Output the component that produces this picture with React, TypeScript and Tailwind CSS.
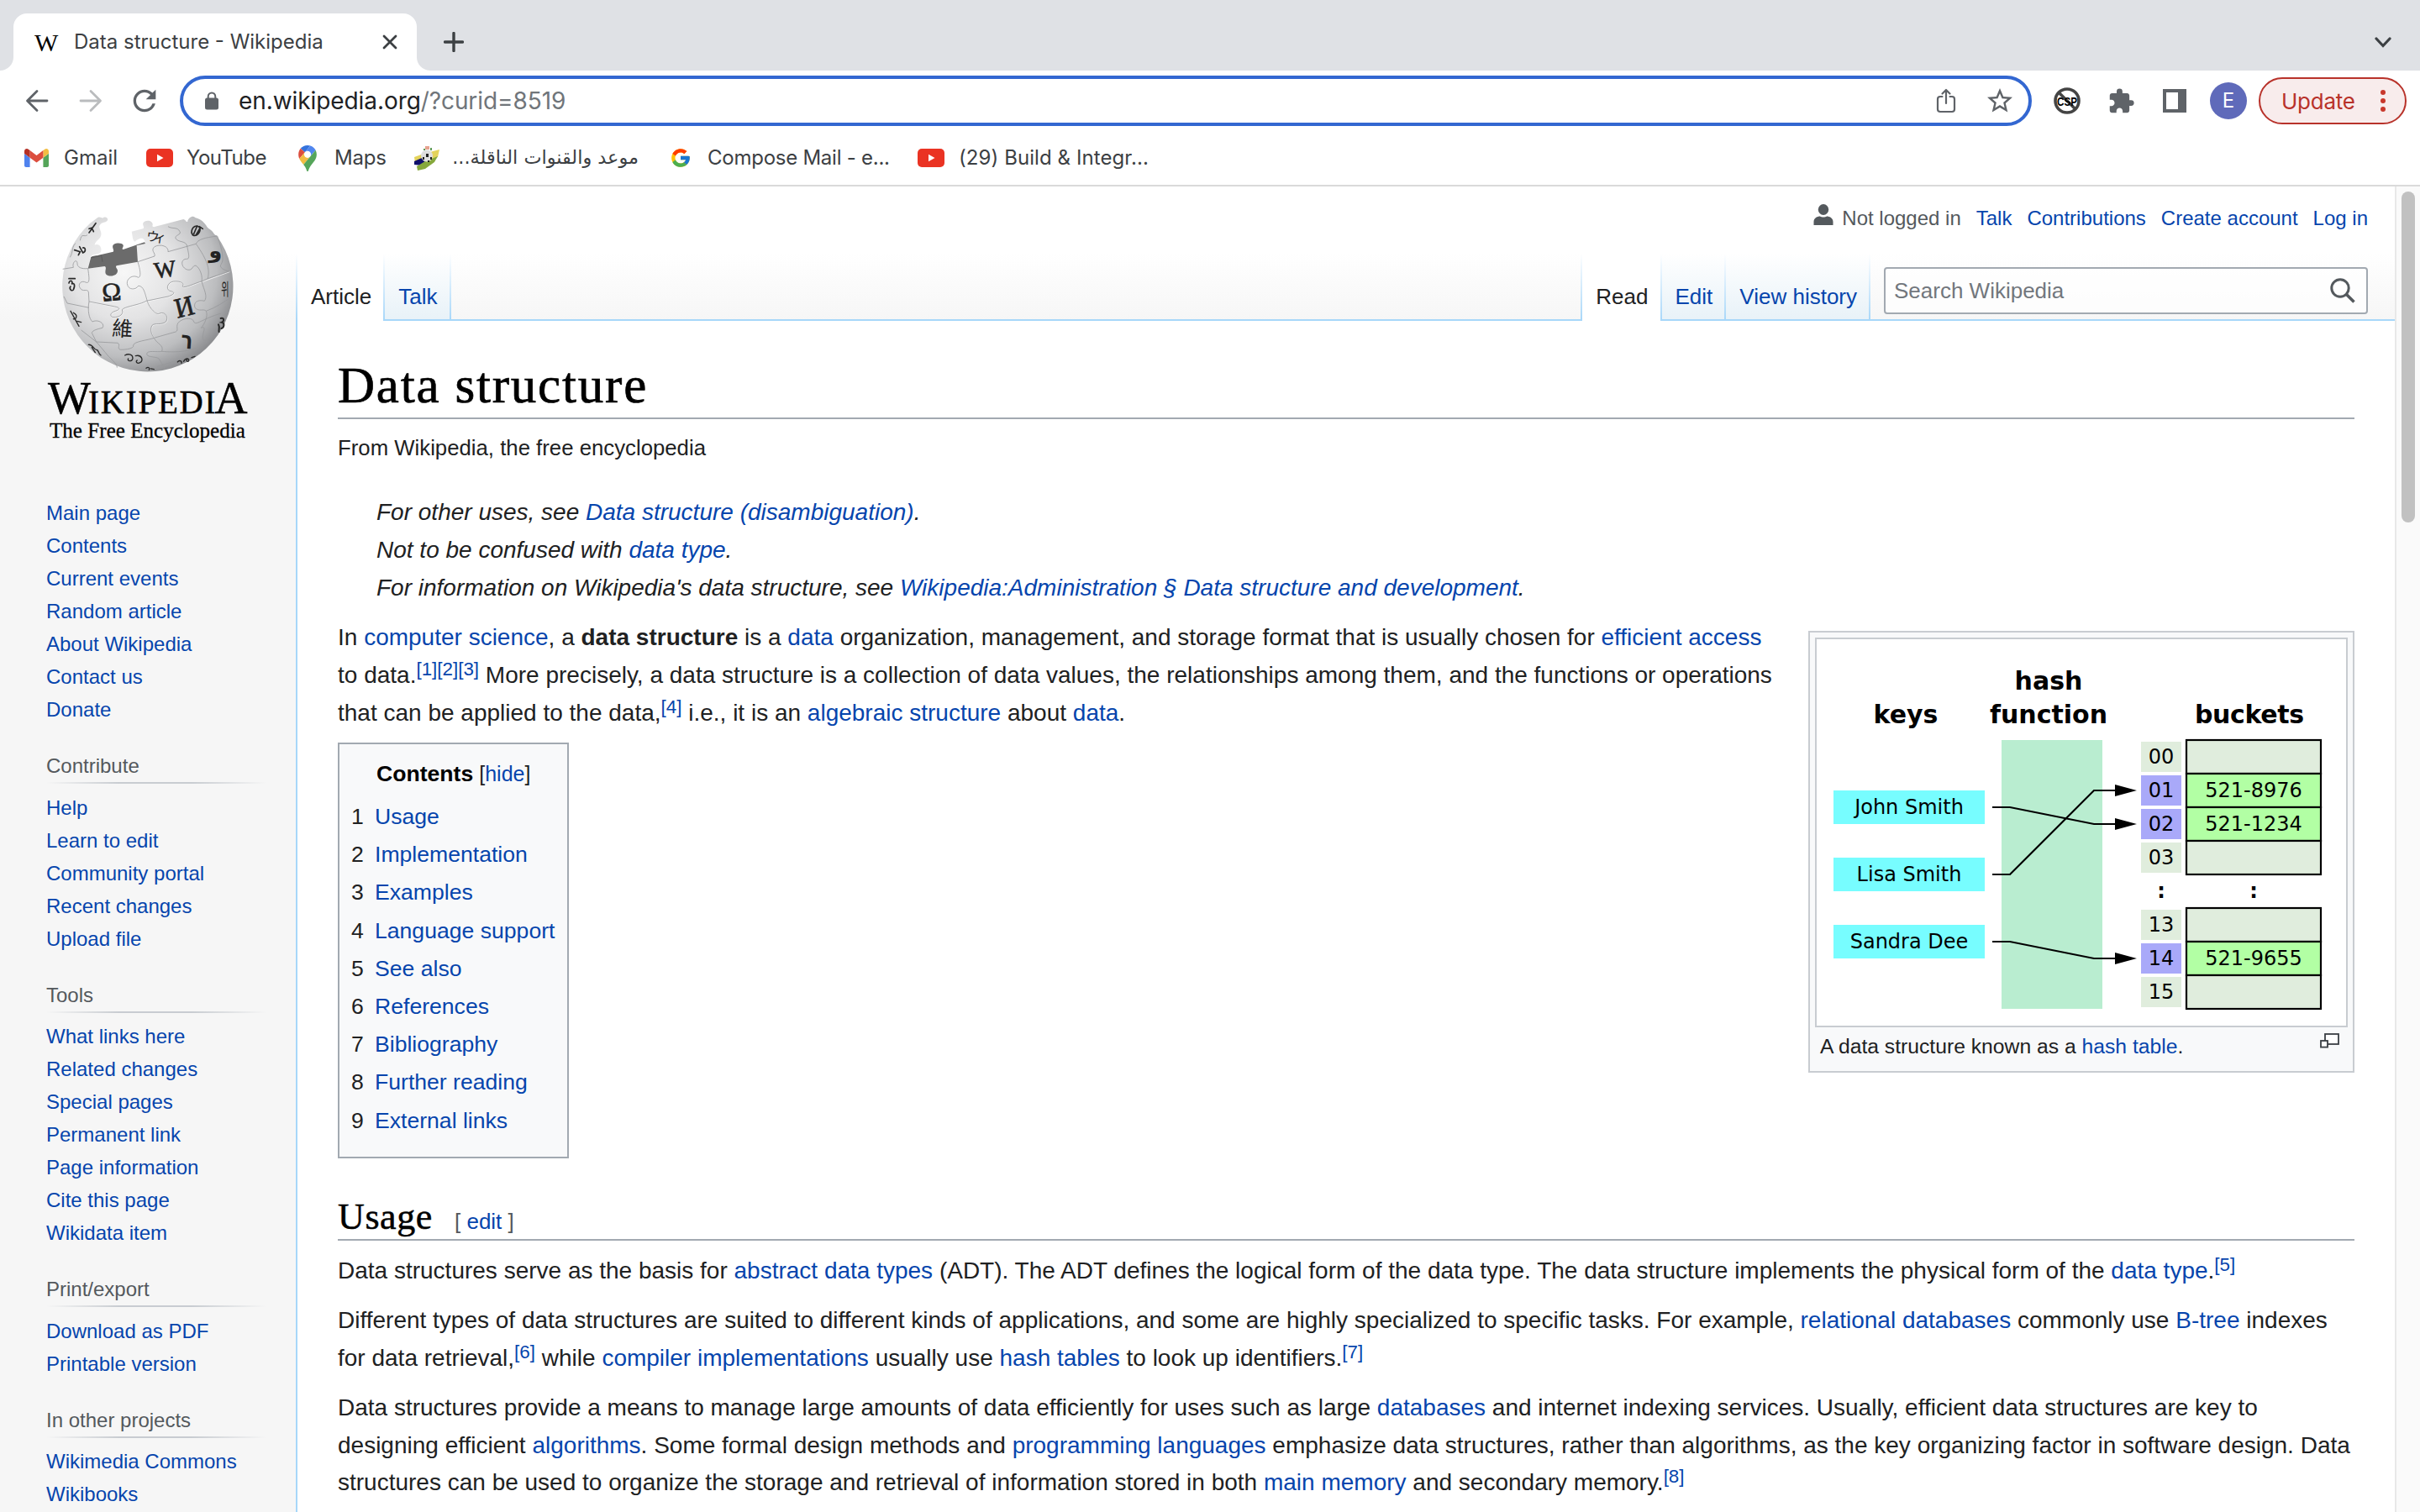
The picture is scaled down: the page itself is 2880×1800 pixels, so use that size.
import React from "react";
import { MdExtension, MdRefresh, MdStarBorder } from "react-icons/md";
import { FcGoogle } from "react-icons/fc";

const A = ({ children }: { children: React.ReactNode }) => (
  <a className="text-[#0645ad]">{children}</a>
);

const Ref = ({ n }: { n: string }) => (
  <sup className="relative -top-[9px] align-baseline text-[22.4px] leading-none text-[#0645ad]">{n}</sup>
);

const YouTube = () => (
  <svg className="h-[22px] w-[32px] shrink-0" viewBox="0 0 32 22">
    <rect width="32" height="22" rx="5" fill="#ea3323" />
    <path d="M13 6.8L20.5 11L13 15.2Z" fill="#fff" />
  </svg>
);

function TabStrip() {
  return (
    <div className="flex h-[84px] items-end bg-[#dfe1e5]">
      <svg className="h-[16px] w-[16px]" viewBox="0 0 16 16">
        <path d="M16 0V16H0A16 16 0 0 0 16 0Z" fill="#fff" />
      </svg>
      <div className="flex h-[68px] w-[480px] items-center rounded-t-[16px] bg-white pb-[1px]">
        <span className="ml-[25px] w-[47px] pt-[2px] font-['Liberation_Serif'] text-[30px] leading-[32px] text-black">W</span>
        <span className="w-[367px] whitespace-nowrap text-[24px] text-[#3c4043]">
          Data structure - Wikipedia
        </span>
        <svg className="h-[18px] w-[18px]" viewBox="0 0 18 18">
          <path d="M2 2L16 16M16 2L2 16" stroke="#3c4043" strokeWidth="2.8" strokeLinecap="round" />
        </svg>
      </div>
      <svg className="h-[16px] w-[16px]" viewBox="0 0 16 16">
        <path d="M0 0V16H16A16 16 0 0 1 0 0Z" fill="#fff" />
      </svg>
      <svg className="mb-[22px] ml-[16px] h-[24px] w-[24px]" viewBox="0 0 24 24">
        <path d="M12 1.5V22.5M1.5 12H22.5" stroke="#3c4043" strokeWidth="3.4" strokeLinecap="round" />
      </svg>
      <svg className="mb-[26px] ml-auto mr-[34px] h-[16px] w-[20px]" viewBox="0 0 20 16">
        <path d="M2 4L10 12.5L18 4" fill="none" stroke="#3c4043" strokeWidth="3.2" strokeLinecap="round" />
      </svg>
    </div>
  );
}

function Toolbar() {
  return (
    <div className="flex h-[72px] items-center bg-white">
      <svg className="ml-[30px] h-[28px] w-[28px]" viewBox="0 0 28 28" fill="none" stroke="#5f6368" strokeWidth="2.8" strokeLinecap="round" strokeLinejoin="round">
        <path d="M26 14H3M14 2.5L2.5 14L14 25.5" />
      </svg>
      <svg className="ml-[36px] h-[28px] w-[28px]" viewBox="0 0 28 28" fill="none" stroke="#babcbe" strokeWidth="2.8" strokeLinecap="round" strokeLinejoin="round">
        <path d="M2 14H25M14 2.5L25.5 14L14 25.5" />
      </svg>
      <MdRefresh className="ml-[30px] h-[40px] w-[40px] text-[#5f6368]" />
      <div className="ml-[22px] flex h-[60px] w-[2204px] items-center rounded-full border-[4px] border-[#3367d1]">
        <svg className="ml-[26px] h-[22px] w-[16px]" viewBox="0 0 16 22">
          <rect y="7.5" width="16" height="14" rx="2.5" fill="#5f6368" />
          <path d="M3.7 9V6A4.3 4.6 0 0 1 12.3 6V9" fill="none" stroke="#5f6368" strokeWidth="2" />
        </svg>
        <span className="ml-[24px] text-[28px] tracking-[-0.08px] text-[#202124]">
          en.wikipedia.org<span className="text-[#70757a]">/?curid=8519</span>
        </span>
        <svg className="ml-auto h-[30px] w-[24px]" viewBox="0 0 24 30" fill="none" stroke="#5f6368" strokeWidth="2.2" strokeLinecap="round" strokeLinejoin="round">
          <path d="M7.5 10H5A3 3 0 0 0 2 13V25A3 3 0 0 0 5 28H19A3 3 0 0 0 22 25V13A3 3 0 0 0 19 10H16.5M12 18V2.5M7.5 6.5L12 2L16.5 6.5" />
        </svg>
        <MdStarBorder className="ml-[34px] mr-[16px] h-[36px] w-[36px] text-[#5f6368]" />
      </div>
      <svg className="ml-[26px] h-[32px] w-[32px]" viewBox="0 0 32 32">
        <circle cx="16" cy="16" r="14" fill="#fff" stroke="#444" strokeWidth="3.6" />
        <path d="M6 6L26 26" stroke="#444" strokeWidth="3.6" />
        <text x="16" y="21.5" textAnchor="middle" textLength="24" lengthAdjust="spacingAndGlyphs" fontFamily="Liberation Sans" fontWeight="bold" fontSize="14" fill="#000">CSP</text>
      </svg>
      <MdExtension className="ml-[32px] h-[33px] w-[33px] text-[#5f6368]" />
      <div className="ml-[33px] flex h-[28px] w-[28px] bg-[#5f6368] p-[4px] pr-[10px]">
        <div className="w-full bg-white" />
      </div>
      <div className="ml-[28px] flex h-[44px] w-[44px] items-center justify-center rounded-full bg-[#5f6aba] text-[24px] text-white">
        E
      </div>
      <div className="ml-[14px] flex h-[56px] w-[176px] items-center rounded-full border-2 border-[#b8322a] bg-[#f8ecec]">
        <span className="ml-[25px] w-[91px] text-[26px] tracking-[-0.25px] text-[#b8322a]">Update</span>
        <div className="ml-[27px] flex flex-col gap-[4px]">
          <i className="h-[6px] w-[6px] rounded-full bg-[#c8382c]" />
          <i className="h-[6px] w-[6px] rounded-full bg-[#c8382c]" />
          <i className="h-[6px] w-[6px] rounded-full bg-[#c8382c]" />
        </div>
      </div>
    </div>
  );
}

function Bookmarks() {
  return (
    <div className="flex h-[66px] items-center whitespace-nowrap border-b-2 border-[#dadada] bg-white pl-[29px] text-[24px] text-[#3c4043]">
      <div className="flex w-[145px] items-center">
        <svg className="mr-[18px] h-[22px] w-[29px]" viewBox="0 0 88 66">
          <path fill="#4f82ee" d="M6 66h14V32L0 17v43c0 3.32 2.69 6 6 6" />
          <path fill="#55a55a" d="M68 66h14c3.32 0 6-2.69 6-6V17L68 32" />
          <path fill="#f2bd42" d="M68 6v26l20-15V9c0-7.42-8.47-11.65-14.4-7.2" />
          <path fill="#dc4e3e" d="M20 32V6l24 18L68 6v26L44 50" />
          <path fill="#b53026" d="M0 9v8l20 15V6l-5.6-4.2C8.46-2.65 0 1.58 0 9" />
        </svg>
        <span>Gmail</span>
      </div>
      <div className="flex w-[181px] items-center">
        <YouTube />
        <span className="ml-[16px] tracking-[-0.5px]">YouTube</span>
      </div>
      <div className="flex w-[137px] items-center">
        <svg className="h-[31px] w-[22px]" viewBox="0 0 92.3 132.3">
          <path fill="#3573dd" d="M60.2 2.2C55.8.8 51 0 46.1 0 32 0 19.3 6.4 10.8 16.5l21.8 18.3L60.2 2.2z" />
          <path fill="#dc4e3e" d="M10.8 16.5C4.1 24.5 0 34.9 0 46.1c0 8.7 1.7 15.7 4.6 22l28-33.3-21.8-18.3z" />
          <path fill="#5086ee" d="M46.2 28.5c9.8 0 17.7 7.9 17.7 17.7 0 4.3-1.6 8.3-4.2 11.4 0 0 13.9-16.6 27.5-32.7-5.6-10.8-15.3-19-27-22.7L32.6 34.8c3.3-3.8 8.1-6.3 13.6-6.3" />
          <path fill="#f2bd42" d="M46.2 63.8c-9.8 0-17.7-7.9-17.7-17.7 0-4.3 1.5-8.3 4.1-11.3l-28 33.3c4.8 10.6 12.8 19.2 21 29.9l34.1-40.5c-3.3 3.9-8.1 6.3-13.5 6.3" />
          <path fill="#55a55a" d="M59.1 109.2c15.4-24.1 33.3-35 33.3-63 0-7.7-1.9-14.9-5.2-21.3L25.6 98c2.6 3.4 5.3 7.3 7.9 11.3 9.4 14.5 6.8 23.1 12.8 23.1s3.4-8.7 12.8-23.2" />
        </svg>
        <span className="ml-[21px] tracking-[-0.2px]">Maps</span>
      </div>
      <div className="flex w-[305px] items-center">
        <svg className="h-[30px] w-[32px] shrink-0" viewBox="0 0 32 30">
          <path d="M1 14L12 10L31 5L29 14L12 20L2 21Z" fill="#e4d35c" />
          <path d="M1 19L10 15L14 20L10 24L1 23Z" fill="#10106c" />
          <path d="M4 25L14 19L29 13L25 20L14 28L5 30Z" fill="#86a83c" />
          <circle cx="16" cy="12.5" r="7" fill="#dedede" />
          <path d="M15 10H18V14H15ZM11 14H13V17H11ZM20 14H22V17H20ZM17 18H19V20H17Z" fill="#222" />
          <path d="M14 1H19V5H14Z" fill="#e6a38f" />
          <path d="M20 3H22V6H20ZM12 4H14V6H12Z" fill="#5f9a55" />
        </svg>
        <span dir="rtl" className="ml-[17px] w-[219px] text-right font-['DejaVu_Sans',sans-serif] text-[22.4px]">
          موعد والقنوات الناقلة...
        </span>
      </div>
      <div className="flex w-[295px] items-center">
        <FcGoogle className="h-[28px] w-[26px] shrink-0" />
        <span className="ml-[19px] tracking-[-0.25px]">Compose Mail - e...</span>
      </div>
      <div className="flex items-center">
        <YouTube />
        <span className="ml-[17px] tracking-[0.08px]">(29) Build &amp; Integr...</span>
      </div>
    </div>
  );
}

function Globe() {
  return (
    <svg className="ml-[70px] h-[193.3px] w-[213.3px]" viewBox="210 100 640 580">
      <defs>
        <radialGradient id="ball" cx="0.36" cy="0.36" r="0.68">
          <stop offset="0" stopColor="#f7f7f7" />
          <stop offset="0.45" stopColor="#e3e3e4" />
          <stop offset="0.8" stopColor="#bcbdbf" />
          <stop offset="1" stopColor="#8d8e91" />
        </radialGradient>
      </defs>
      <path
        d="M344 122C352 112 362 118 366 120C374 112 388 118 384 128C378 138 364 132 356 146C350 156 366 168 360 184C356 196 340 202 338 216C352 208 366 224 360 240C354 254 326 244 322 262L314 300L492 276L486 214L518 208C516 184 494 192 482 204C472 200 474 182 470 168L510 158C520 152 502 142 516 132C532 124 550 134 544 148C548 156 560 148 572 146L655 124C668 128 662 136 670 132C670 120 688 110 694 116C700 122 718 120 736 146C742 160 754 158 764 176C772 186 772 178 775 185A305 305 0 1 1 322 138Z"
        fill="url(#ball)"
      />
      <path d="M314 300L324 262C328 252 340 256 352 252L404 240C410 236 396 222 406 214C416 208 436 208 440 216C442 224 432 230 440 232L516 206L519 211L488 218L492 276L416 290C410 296 420 300 420 308C420 326 394 332 380 322C370 312 384 296 374 292Z" fill="#6b6b6b" />
      <path d="M324 262L362 254L366 276" fill="none" stroke="#585858" strokeWidth="3" />
      <g fill="none" stroke="#fff" strokeWidth="3" opacity="0.7" transform="translate(2 2)">
        <path d="M492 276C500 300 506 332 494 332C474 320 452 336 454 354C458 380 486 376 494 362C514 362 518 390 526 416C532 440 560 470 570 460C594 452 604 480 590 492C570 504 544 490 540 510C536 530 546 540 550 548" />
        <path d="M318 418L410 436C430 440 430 446 412 452C390 458 390 476 412 474C438 470 440 456 436 448C440 436 500 430 522 416L600 400C624 392 628 384 606 380C590 372 600 348 620 346C644 344 660 352 652 364C660 372 700 350 720 346L818 310" />
      </g>
      <g fill="none" stroke="#97989a" strokeWidth="2.4">
        <path d="M492 276C500 300 506 332 494 332C474 320 452 336 454 354C458 380 486 376 494 362C514 362 518 390 526 416C532 440 560 470 570 460C594 452 604 480 590 492C570 504 544 490 540 510C536 530 546 540 550 548C560 570 586 572 578 596C560 600 524 590 524 606C526 620 566 612 570 626L590 660" />
        <path d="M318 418L410 436C430 440 430 446 412 452C390 458 390 476 412 474C438 470 440 456 436 448C440 436 500 430 522 416L600 400C624 392 628 384 606 380C590 372 600 348 620 346C644 344 660 352 652 364C660 372 700 350 720 346L742 336L818 310" />
        <path d="M314 300C318 330 322 354 308 350C290 340 276 356 286 370C296 386 312 370 316 384L318 418C312 450 318 480 330 490C350 480 376 496 366 512C350 516 330 520 328 530L344 562L376 600C390 620 420 640 418 654" />
        <path d="M492 276L552 256C556 244 536 236 552 222C574 210 604 222 600 240L700 212C706 196 730 190 776 184" />
        <path d="M600 150C616 160 634 150 642 168C650 180 620 180 628 194C640 208 664 200 668 220C674 250 680 268 664 266C644 268 646 296 668 304C690 310 686 286 700 290C716 300 724 330 720 346C730 380 742 400 730 416C706 410 690 420 696 440C710 456 728 442 736 452C744 470 730 500 718 512" />
        <path d="M344 562L420 566C432 572 416 586 430 590C450 590 480 586 476 574C478 560 530 556 550 548L628 526C640 520 624 504 640 490C660 474 690 476 692 490C700 506 720 480 790 460" />
        <path d="M224 302L262 296C256 276 276 264 276 282C276 296 290 302 314 300M228 400L240 424L318 440M286 200C292 170 300 190 312 180M250 260C262 240 256 220 270 210M290 520L344 562" />
        <path d="M742 336C750 300 740 270 700 212M776 184C796 240 800 270 790 284C780 296 800 306 818 310M736 452C770 440 800 420 828 400M718 512C750 500 700 560 740 560C700 600 620 600 578 596M560 650L700 610" />
      </g>
      <g fill="#222" fontFamily="'Liberation Serif', 'Noto Sans CJK TC', serif">
        <text x="364" y="414" fontSize="92" stroke="#222" strokeWidth="2" transform="rotate(-5 400 380)">Ω</text>
        <text x="550" y="330" fontSize="82" stroke="#222" strokeWidth="2" transform="rotate(-8 590 300)" textLength="78" lengthAdjust="spacingAndGlyphs">W</text>
        <text x="624" y="470" fontSize="100" stroke="#222" strokeWidth="2" transform="rotate(-14 658 436)" textLength="68" lengthAdjust="spacingAndGlyphs">И</text>
        <text x="400" y="542" fontSize="74" transform="rotate(4 440 520)" fontFamily="'Noto Sans CJK TC', sans-serif">維</text>
        <text x="522" y="204" fontSize="46" transform="rotate(8 556 190)" textLength="72" fontFamily="'Noto Sans CJK JP', sans-serif">ウィ</text>
        <text x="646" y="586" fontSize="88" transform="rotate(4 668 560)" textLength="42" lengthAdjust="spacingAndGlyphs" fontFamily="'DejaVu Sans', sans-serif" fontWeight="bold">ר</text>
        <text x="790" y="398" fontSize="62" fontFamily="'Noto Sans CJK KR', sans-serif" textLength="28" lengthAdjust="spacingAndGlyphs">위</text>
        <text x="746" y="262" fontSize="76" fontFamily="'DejaVu Sans', sans-serif" fontWeight="bold">و</text>
      </g>
      <g fill="none" stroke="#2a2a2a" strokeWidth="5" strokeLinecap="round">
        <path d="M318 172L342 138M318 158L330 154M330 160L334 168" />
        <path d="M266 234L286 240L280 252M284 222L296 244C308 240 306 224 296 226" />
        <path d="M246 336H268M246 352C250 338 262 344 256 356C264 348 270 360 262 376C254 384 246 370 252 364" />
        <path d="M252 452L282 506M262 458C280 466 272 484 262 480M276 488L290 492" strokeWidth="4" />
        <path d="M316 572C330 570 336 590 344 590C354 590 350 606 360 610M328 582L340 600" strokeWidth="4" />
        <path d="M446 610C460 602 474 608 474 620C472 634 452 632 458 622M484 612C506 606 514 630 500 636C490 642 482 632 490 628" strokeWidth="4" />
        <path d="M684 172C684 150 706 140 714 156C716 172 702 188 688 180ZM692 176L704 148M700 180L714 156M712 150L724 158" />
        <path d="M788 478C800 474 802 488 792 492C804 494 800 512 790 514M780 500C786 510 780 520 782 526" strokeWidth="6" />
        <path d="M634 634C640 626 650 630 648 638M656 632C660 620 676 618 674 630C670 636 662 628 668 624M684 618L696 614M522 656C530 650 536 656 532 662M538 658L550 660" strokeWidth="4" />
      </g>
    </svg>
  );
}

function Sidebar() {
  const groups: [string, string[]][] = [
    ["Contribute", ["Help", "Learn to edit", "Community portal", "Recent changes", "Upload file"]],
    ["Tools", ["What links here", "Related changes", "Special pages", "Permanent link", "Page information", "Cite this page", "Wikidata item"]],
    ["Print/export", ["Download as PDF", "Printable version"]],
    ["In other projects", ["Wikimedia Commons", "Wikibooks"]],
  ];
  const main = ["Main page", "Contents", "Current events", "Random article", "About Wikipedia", "Contact us", "Donate"];
  return (
    <aside className="w-[352px] shrink-0 pt-[31px] text-[24px]">
      <Globe />
      <div className="-mt-[2px] flex h-[54px] items-baseline whitespace-nowrap pl-[57px] font-['Liberation_Serif'] text-[39px] leading-[60px] text-black [-webkit-text-stroke:0.5px_black]">
        <span className="-mr-[3px] text-[54px]">W</span>
        <span className="tracking-[1.8px]">IKIPEDI</span>
        <span className="-ml-[3px] text-[54px]">A</span>
      </div>
      <div className="h-[38px] whitespace-nowrap pl-[59px] font-['Liberation_Serif'] text-[25px] leading-[30px] tracking-[0.05px] text-black [-webkit-text-stroke:0.3px_black]">
        The Free Encyclopedia
      </div>
      <ul className="pl-[55px] pt-[55px] leading-[39px]">
        {main.map((t) => (
          <li key={t}><A>{t}</A></li>
        ))}
      </ul>
      {groups.map(([title, items]) => (
        <section key={title} className="mt-[33px] pl-[55px]">
          <h3 className="h-[34px] leading-[30px] text-[#54595d]">{title}</h3>
          <div className="h-[2px] w-[262px] bg-[linear-gradient(to_right,rgba(200,204,209,0)_0,#c8ccd1_33%,#c8ccd1_66%,rgba(200,204,209,0)_100%)]" />
          <ul className="pt-[8.5px] leading-[39px]">
            {items.map((t) => (
              <li key={t}><A>{t}</A></li>
            ))}
          </ul>
        </section>
      ))}
    </aside>
  );
}

const Sep = () => <div className="w-[2px] shrink-0 bg-[linear-gradient(to_bottom,#fff,#a7d7f9)]" />;

const Tab = ({ label, active }: { label: string; active?: boolean }) =>
  active ? (
    <div className="bg-white pl-[16px] pr-[14px] pt-[36px] leading-[31px] text-[#202122]">{label}</div>
  ) : (
    <div className="border-b-2 border-[#a7d7f9] bg-[linear-gradient(to_bottom,#fff,#e8f2f8)] pl-[16px] pr-[14px] pt-[36px] leading-[31px] text-[#0645ad]">{label}</div>
  );

function PageHeader() {
  return (
    <header className="h-[160px]">
      <div className="flex h-[80px] justify-end gap-[18px] pr-[32px] pt-[23px] text-[24px] leading-[30px] text-[#0645ad]">
        <span className="flex text-[#54595d]">
          <svg className="-mt-[2px] mr-[10px] h-[26px] w-[24px]" viewBox="0 0 24 26">
            <ellipse cx="12" cy="6.5" rx="6.2" ry="6.5" fill="#54595d" />
            <path d="M0.5 25V21C0.5 16.5 5 14.5 8 14.5C10 15.8 14 15.8 16 14.5C19 14.5 23.5 16.5 23.5 21V25Z" fill="#54595d" />
          </svg>
          Not logged in
        </span>
        <span>Talk</span>
        <span>Contributions</span>
        <span>Create account</span>
        <span>Log in</span>
      </div>
      <div className="flex h-[80px] text-[26px]">
        <Sep />
        <Tab label="Article" active />
        <Sep />
        <Tab label="Talk" />
        <Sep />
        <div className="flex-1 border-b-2 border-[#a7d7f9]" />
        <Sep />
        <Tab label="Read" active />
        <Sep />
        <Tab label="Edit" />
        <Sep />
        <Tab label="View history" />
        <Sep />
        <div className="border-b-2 border-[#a7d7f9] pl-[16px] pr-[32px] pt-[16px]">
          <div className="flex h-[56px] w-[576px] items-center justify-between rounded-[4px] border-2 border-[#a2a9b1] bg-white/70 pl-[10px] pr-[13px] text-[#72777d]">
            <span>Search Wikipedia</span>
            <svg className="h-[30px] w-[30px]" viewBox="0 0 30 30" fill="none" stroke="#54595d" strokeWidth="3">
              <circle cx="12" cy="12" r="10.2" />
              <path d="M19 19L28.5 28.5" strokeWidth="3.6" />
            </svg>
          </div>
        </div>
      </div>
    </header>
  );
}

function HashDiagram() {
  const rows: [string, number, string][] = [
    ["00", 120, ""], ["01", 160, "521-8976"], ["02", 200, "521-1234"], ["03", 240, ""],
    ["13", 320, ""], ["14", 360, "521-9655"], ["15", 400, ""],
  ];
  const keys: [string, number][] = [["John Smith", 180], ["Lisa Smith", 260], ["Sandra Dee", 340]];
  return (
    <svg className="h-[460px] w-[630px]" viewBox="0 0 630 460" fontFamily="DejaVu Sans" fontSize="24" textAnchor="middle">
      <rect width="630" height="460" fill="#fff" />
      <g fontWeight="bold" fontSize="30">
        <text x="106" y="100">keys</text>
        <text x="276" y="60">hash</text>
        <text x="276" y="100">function</text>
        <text x="515" y="100" textLength="130">buckets</text>
      </g>
      <rect x="220" y="120" width="120" height="320" fill="#b9edd0" />
      {keys.map(([k, y]) => (
        <g key={k}>
          <rect x="20" y={y} width="180" height="40" fill="#77fdff" />
          <text x="110" y={y + 28}>{k}</text>
        </g>
      ))}
      {rows.map(([n, y, v]) => (
        <g key={n}>
          <rect x="386" y={y + 2} width="48" height="36" fill={v ? "#a9a9f9" : "#e0eddd"} />
          <text x="410" y={y + 28}>{n}</text>
          <rect x="440" y={y} width="160" height="40" fill={v ? "#b2ffa4" : "#e0eddd"} stroke="#000" strokeWidth="2.2" />
          <text x="520" y={y + 28}>{v}</text>
        </g>
      ))}
      <g fontWeight="bold">
        <text x="410" y="308">:</text>
        <text x="520" y="308">:</text>
      </g>
      <g fill="none" stroke="#000" strokeWidth="2.2">
        <path d="M209 200H230L330 220H358" />
        <path d="M209 280H230L330 180H358" />
        <path d="M209 360H230L330 380H358" />
      </g>
      <path d="M355 173L381 180L355 187ZM355 213L381 220L355 227ZM355 373L381 380L355 387Z" fill="#000" />
    </svg>
  );
}

function Thumb() {
  return (
    <figure className="mt-[14px] h-[526px] w-[650px] shrink-0 border-2 border-[#c8ccd1] bg-[#f8f9fa] p-[6px]">
      <div className="w-[634px] border-2 border-[#c8ccd1]">
        <HashDiagram />
      </div>
      <figcaption className="flex justify-between px-[6px] pt-[6px] text-[24.7px] leading-[34px] text-[#202122]">
        <span>A data structure known as a <A>hash table</A>.</span>
        <svg className="mr-[4px] mt-[1px] h-[18px] w-[23px]" viewBox="0 0 23 18" fill="#fff" stroke="#3a3f44" strokeWidth="1.8">
          <rect x="6" y="1" width="16" height="12" />
          <rect x="1" y="9" width="8" height="7.6" />
        </svg>
      </figcaption>
    </figure>
  );
}

function Toc() {
  const items = ["Usage", "Implementation", "Examples", "Language support", "See also", "References", "Bibliography", "Further reading", "External links"];
  return (
    <nav className="mt-[12.6px] h-[495px] w-[275px] border-2 border-[#a2a9b1] bg-[#f8f9fa] pl-[14px] pt-[14px] text-[26.6px]">
      <div className="h-[50px] whitespace-nowrap pl-[30px] leading-[42px] text-[#202122]">
        <b className="text-black">Contents</b>
        <span className="ml-[7px] text-[25px]">[<A>hide</A>]</span>
      </div>
      <ol className="leading-[45.2px]">
        {items.map((t, i) => (
          <li key={t} className="flex whitespace-nowrap">
            <span className="w-[28px]">{i + 1}</span>
            <A>{t}</A>
          </li>
        ))}
      </ol>
    </nav>
  );
}

function Article() {
  return (
    <main className="h-[1418px] overflow-hidden border-l-2 border-[#a7d7f9] bg-white px-[48px] pt-[39px] text-[28px] leading-[44.8px] text-[#202122]">
      <h1 className="h-[78px] border-b-2 border-[#a2a9b1] font-['Liberation_Serif'] text-[61px] leading-[75px] tracking-[1.8px] text-black [-webkit-text-stroke:0.7px_black]">
        Data structure
      </h1>
      <div className="mt-[13.5px] text-[25.76px] leading-[41.2px]">From Wikipedia, the free encyclopedia</div>
      <div className="mt-[33.3px] pl-[46px] italic leading-[45px]">
        <p>For other uses, see <A>Data structure (disambiguation)</A>.</p>
        <p>Not to be confused with <A>data type</A>.</p>
        <p>For information on Wikipedia&#39;s data structure, see <A>Wikipedia:Administration § Data structure and development</A>.</p>
      </div>
      <div className="mt-[15px] flex justify-between">
        <div>
          <p className="whitespace-nowrap">
            In <A>computer science</A>, a <b>data structure</b> is a <A>data</A> organization, management, and storage format that is usually chosen for <A>efficient access</A><br />
            to data.<Ref n="[1][2][3]" /> More precisely, a data structure is a collection of data values, the relationships among them, and the functions or operations<br />
            that can be applied to the data,<Ref n="[4]" /> i.e., it is an <A>algebraic structure</A> about <A>data</A>.
          </p>
          <Toc />
        </div>
        <Thumb />
      </div>
      <h2 className="mt-[45px] flex h-[53px] items-baseline border-b-2 border-[#a2a9b1] font-['Liberation_Serif'] text-[44px] leading-[50px] tracking-[0.6px] text-black">
        <span className="[-webkit-text-stroke:0.5px_black]">Usage</span>
        <span className="ml-[26px] font-['Liberation_Sans'] text-[26px] tracking-normal text-[#54595d]">
          [ <A>edit</A> ]
        </span>
      </h2>
      <p className="mt-[14.5px] whitespace-nowrap">
        Data structures serve as the basis for <A>abstract data types</A> (ADT). The ADT defines the logical form of the data type. The data structure implements the physical form of the <A>data type</A>.<Ref n="[5]" />
      </p>
      <p className="mt-[14px] whitespace-nowrap">
        Different types of data structures are suited to different kinds of applications, and some are highly specialized to specific tasks. For example, <A>relational databases</A> commonly use <A>B-tree</A> indexes<br />
        for data retrieval,<Ref n="[6]" /> while <A>compiler implementations</A> usually use <A>hash tables</A> to look up identifiers.<Ref n="[7]" />
      </p>
      <p className="mt-[14px] whitespace-nowrap">
        Data structures provide a means to manage large amounts of data efficiently for uses such as large <A>databases</A> and internet indexing services. Usually, efficient data structures are key to<br />
        designing efficient <A>algorithms</A>. Some formal design methods and <A>programming languages</A> emphasize data structures, rather than algorithms, as the key organizing factor in software design. Data<br />
        structures can be used to organize the storage and retrieval of information stored in both <A>main memory</A> and secondary memory.<Ref n="[8]" />
      </p>
    </main>
  );
}

export default function App() {
  return (
    <div className="flex h-[1800px] w-[2880px] flex-col overflow-hidden bg-white font-['Inter',sans-serif]">
      <TabStrip />
      <Toolbar />
      <Bookmarks />
      <div className="flex h-[1578px] font-['Liberation_Sans',sans-serif]">
        <div className="flex w-[2850px] bg-[#f6f6f6] bg-[linear-gradient(to_bottom,#fff_50%,#f6f6f6_100%)] bg-[length:100%_160px] bg-no-repeat">
          <Sidebar />
          <div className="min-w-0 flex-1">
            <PageHeader />
            <Article />
          </div>
        </div>
        <div className="w-[30px] border-l-2 border-[#e8e8e8] bg-[#fafafa] pl-[6px] pt-[6px]">
          <div className="h-[394px] w-[16px] rounded-full bg-[#c1c1c1]" />
        </div>
      </div>
    </div>
  );
}
